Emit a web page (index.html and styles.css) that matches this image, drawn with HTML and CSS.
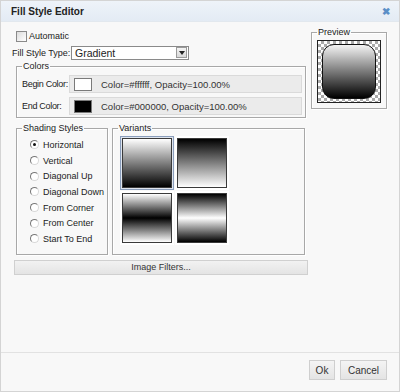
FILE: index.html
```html
<!DOCTYPE html>
<html lang="en">
<head>
    <meta charset="UTF-8">
    <title>Fill Style Editor</title>
    <link rel="stylesheet" href="styles.css">
</head>
<body>
    <div class="dialog">
        <div class="titlebar">
            <span class="title">Fill Style Editor</span>
            <span class="close">&#x2716;</span>
        </div>

        <div class="content">
            <div class="left">
                <label class="check-row"><span class="checkbox"></span>Automatic</label>

                <div class="type-row">
                    <span class="type-label">Fill Style Type:</span>
                    <div class="select">
                        <span class="select-text">Gradient</span>
                        <span class="select-btn"><span class="arrow"></span></span>
                    </div>
                </div>

                <fieldset class="group colors">
                    <legend>Colors</legend>
                    <div class="color-row">
                        <span class="color-label">Begin Color:</span>
                        <div class="color-box">
                            <span class="swatch white"></span>
                            <span>Color=#ffffff, Opacity=100.00%</span>
                        </div>
                    </div>
                    <div class="color-row">
                        <span class="color-label">End Color:</span>
                        <div class="color-box">
                            <span class="swatch black"></span>
                            <span>Color=#000000, Opacity=100.00%</span>
                        </div>
                    </div>
                </fieldset>

                <div class="lower">
                    <fieldset class="group shading">
                        <legend>Shading Styles</legend>
                        <div class="radio-row"><span class="radio checked"></span>Horizontal</div>
                        <div class="radio-row"><span class="radio"></span>Vertical</div>
                        <div class="radio-row"><span class="radio"></span>Diagonal Up</div>
                        <div class="radio-row"><span class="radio"></span>Diagonal Down</div>
                        <div class="radio-row"><span class="radio"></span>From Corner</div>
                        <div class="radio-row"><span class="radio"></span>From Center</div>
                        <div class="radio-row"><span class="radio"></span>Start To End</div>
                    </fieldset>

                    <fieldset class="group variants">
                        <legend>Variants</legend>
                        <div class="tiles">
                            <div class="tile selected"><div class="grad g1"></div></div>
                            <div class="tile"><div class="grad g2"></div></div>
                            <div class="tile"><div class="grad g3"></div></div>
                            <div class="tile"><div class="grad g4"></div></div>
                        </div>
                    </fieldset>
                </div>

                <div class="filters-btn">Image Filters...</div>
            </div>

            <div class="right">
                <fieldset class="group preview">
                    <legend>Preview</legend>
                    <div class="checker">
                        <div class="shape"></div>
                    </div>
                </fieldset>
            </div>
        </div>

        <div class="footer">
            <button class="btn ok">Ok</button>
            <button class="btn">Cancel</button>
        </div>
    </div>
</body>
</html>
```

FILE: styles.css
```css
* {
    margin: 0;
    padding: 0;
    box-sizing: border-box;
}

body {
    font-family: "Liberation Sans", Arial, sans-serif;
    font-size: 9px;
    color: #222;
    background: #fff;
    white-space: nowrap;
}

/* 对话框外框 */
.dialog {
    width: 400px;
    height: 392px;
    border: 1px solid #d4d4d4;
    background: #f8f8f8;
    display: flex;
    flex-direction: column;
}

.titlebar {
    height: 21px;
    flex: none;
    display: flex;
    justify-content: space-between;
    align-items: center;
    padding: 0 9px 0 10px;
    background: linear-gradient(#eef3f9, #e3ebf4);
    border-bottom: 1px solid #e2e8ee;
}

.title {
    font-weight: bold;
    font-size: 10px;
    color: #222;
}

.close {
    color: #5b8fc7;
    font-size: 10px;
    font-weight: bold;
}

/* 主要内容 */
.content {
    flex: 1;
    display: flex;
    gap: 3px;
    padding: 5px 0 0 11px;
}

.left {
    width: 296px;
    flex: none;
    padding-top: 3px;
}

.check-row {
    display: flex;
    align-items: center;
    height: 12px;
    padding-left: 4px;
}

.checkbox {
    width: 11px;
    height: 11px;
    border: 1px solid #8a8a8a;
    background: linear-gradient(135deg, #dcdcdc, #fff);
    margin-right: 2px;
}

.type-row {
    display: flex;
    align-items: center;
    margin-top: 3px;
    height: 15px;
}

.type-label {
    width: 59px;
    flex: none;
}

.select {
    width: 118px;
    height: 14px;
    border: 1px solid #8a8a8a;
    background: #fff;
    display: flex;
    align-items: center;
    justify-content: space-between;
    font-size: 10.5px;
}

.select-text {
    padding-left: 3px;
}

.select-btn {
    width: 11px;
    height: 11px;
    margin-right: 1px;
    background: linear-gradient(#f4f4f4, #d8d8d8);
    border: 1px solid #9a9a9a;
    display: flex;
    align-items: center;
    justify-content: center;
}

.arrow {
    width: 0;
    height: 0;
    border-left: 3px solid transparent;
    border-right: 3px solid transparent;
    border-top: 4px solid #222;
}

/* 分组框 */
.group {
    border: 1px solid #a8a8a8;
    box-shadow: inset 1px 1px 0 #fff, 1px 1px 0 #fff;
}

.group legend {
    padding: 0 1px;
    margin-left: 5px;
    line-height: 11px;
}

.colors {
    margin: 1px 0 0 4px;
    width: 290px;
    padding: 3px 3px 2px 0;
}

.color-row {
    display: flex;
    align-items: center;
    height: 18px;
    margin: 0 0 4px 5px;
}

.color-row:last-child {
    margin-bottom: 0;
}

.color-label {
    width: 47px;
    flex: none;
    letter-spacing: -0.3px;
}

.color-box {
    flex: 1;
    height: 18px;
    background: #ebebeb;
    border: 1px solid #dadada;
    display: flex;
    align-items: center;
    gap: 9px;
    padding-left: 4px;
    font-size: 9.5px;
    color: #333;
}

.swatch {
    width: 18px;
    height: 13px;
    border: 1px solid #7a7a7a;
}

.swatch.white {
    background: #fff;
}

.swatch.black {
    background: #000;
}

.lower {
    display: flex;
    gap: 4px;
    margin: 5px 0 0 4px;
    height: 132px;
}

.shading {
    width: 92px;
    padding-top: 3px;
}

.radio-row {
    display: flex;
    align-items: center;
    height: 15.7px;
    padding-left: 13px;
}

.radio {
    width: 9px;
    height: 9px;
    border-radius: 50%;
    border: 1px solid #777;
    border-right-color: #d8d8d8;
    border-bottom-color: #d8d8d8;
    background: #fff;
    margin-right: 4px;
    position: relative;
}

.radio.checked::after {
    content: '';
    position: absolute;
    left: 2px;
    top: 2px;
    width: 3px;
    height: 3px;
    border-radius: 50%;
    background: #111;
}

.variants {
    width: 193px;
    padding-top: 2px;
}

.tiles {
    display: grid;
    grid-template-columns: 54px 54px;
    gap: 1px;
    margin-left: 7px;
}

.tile {
    width: 54px;
    height: 54px;
    padding: 1px;
    border: 1px solid transparent;
    background: #fff;
}

.tile.selected {
    border-color: #8a9dbb;
    background: #dfe5ee;
}

.grad {
    width: 100%;
    height: 100%;
    border: 1px solid #3a3a3a;
}

.g1 {
    background: linear-gradient(#fff, #000);
}

.g2 {
    background: linear-gradient(#000, #fff);
}

.g3 {
    background: linear-gradient(#fff, #000 50%, #fff);
}

.g4 {
    background: linear-gradient(#000, #fff 50%, #000);
}

.filters-btn {
    margin: 5px 0 0 2px;
    width: 294px;
    height: 15px;
    border: 1px solid #d0d0d0;
    background: linear-gradient(#f2f2f2, #e4e4e4);
    text-align: center;
    line-height: 13px;
    color: #333;
}

/* 预览 */
.right {
    width: 76px;
    flex: none;
}

.preview {
    width: 76px;
    height: 82px;
    padding-top: 2px;
}

.checker {
    width: 64px;
    height: 63px;
    margin-left: 5px;
    border: 1px solid #222;
    background-color: #fff;
    background-image:
        linear-gradient(45deg, #aaa 25%, transparent 25%, transparent 75%, #aaa 75%),
        linear-gradient(45deg, #aaa 25%, transparent 25%, transparent 75%, #aaa 75%);
    background-size: 6px 6px;
    background-position: 0 0, 3px 3px;
    padding: 3px 4px;
}

.shape {
    width: 100%;
    height: 100%;
    border-radius: 12px;
    border: 1px solid #111;
    background: linear-gradient(#f4f4f4, #000);
}

/* 底部按钮 */
.footer {
    flex: none;
    height: 39px;
    border-top: 1px solid #e2e2e2;
    display: flex;
    justify-content: flex-end;
    align-items: flex-start;
    gap: 5px;
    padding: 7px 12px 0 0;
}

.btn {
    height: 20px;
    width: 47px;
    font-family: "Liberation Sans", Arial, sans-serif;
    font-size: 10px;
    color: #333;
    border: 1px solid #cfcfcf;
    background: linear-gradient(#f4f4f4, #e4e4e4);
}

.btn.ok {
    width: 26px;
}
```
